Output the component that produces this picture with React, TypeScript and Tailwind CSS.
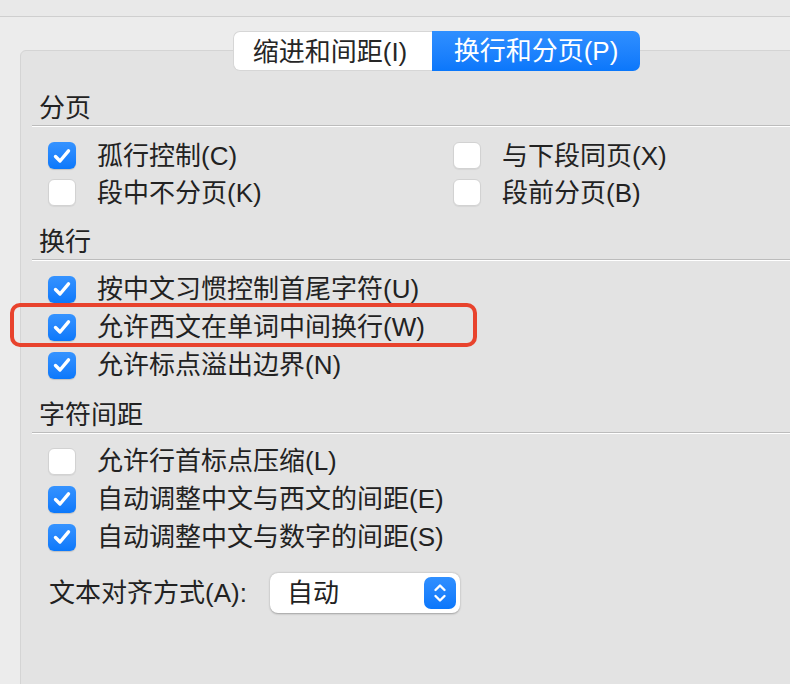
import React from "react";

type Item = { label: string; checked: boolean; highlight?: boolean };

const Check = ({ checked }: { checked: boolean }) =>
  checked ? (
    <div className="flex h-[27px] w-[28px] shrink-0 items-center justify-center rounded-[6px] bg-gradient-to-b from-[#3593ff] to-[#0a78fb] shadow-[0_1px_1px_rgba(0,0,0,0.15)]">
      <svg width="20" height="18" viewBox="0 0 20 18">
        <path
          d="M3.5 9.5 L8 14 L16.5 3.8"
          fill="none"
          stroke="white"
          strokeWidth="3.4"
          strokeLinecap="round"
          strokeLinejoin="round"
        />
      </svg>
    </div>
  ) : (
    <div className="h-[27px] w-[28px] shrink-0 rounded-[6px] border border-[#d2d2d2] bg-white shadow-[0_1px_1px_rgba(0,0,0,0.06)]" />
  );

const Row = ({ item, h = "h-[37px]" }: { item: Item; h?: string }) => (
  <div className={`relative flex items-center gap-[21px] pl-[16px] ${h}`}>
    {item.highlight && (
      <div className="absolute left-[-22px] top-[-5px] h-[44px] w-[467px] rounded-[10px] border-[4px] border-[#e8432d]" />
    )}
    <Check checked={item.checked} />
    <span className="whitespace-nowrap leading-none">{item.label}</span>
  </div>
);

const Heading = ({ text, mt }: { text: string; mt: string }) => (
  <div className={mt}>
    <div className="h-[34px] pl-[7px] leading-[34px]">{text}</div>
    <div className="h-px bg-[#bcbcbc]" />
    <div className="h-px bg-white" />
  </div>
);

const wrapItems: Item[] = [
  { label: "按中文习惯控制首尾字符(U)", checked: true },
  { label: "允许西文在单词中间换行(W)", checked: true, highlight: true },
  { label: "允许标点溢出边界(N)", checked: true },
];

const spacingItems: Item[] = [
  { label: "允许行首标点压缩(L)", checked: false },
  { label: "自动调整中文与西文的间距(E)", checked: true },
  { label: "自动调整中文与数字的间距(S)", checked: true },
];

export default function App() {
  return (
    <div
      className="h-[684px] w-[790px] overflow-hidden bg-[#ececec] text-[26px] text-[#222]"
      style={{ fontFamily: '"Liberation Sans", "Noto Sans CJK SC", sans-serif' }}
    >
      <div className="h-[17px] border-b border-[#cfcfcf] bg-[#e9e9e9]" />

      <div className="relative z-10 mt-[14px] ml-[233px] flex h-[40px] w-[407px] leading-[40px]">
        <div className="w-[199px] rounded-l-[7px] border border-r-0 border-[#d6d6d6] bg-white pr-[6px] text-center text-[#262626]">
          缩进和间距(I)
        </div>
        <div className="w-[208px] rounded-r-[7px] bg-gradient-to-b from-[#2f8fff] to-[#0a77fb] text-center text-white">
          换行和分页(P)
        </div>
      </div>

      <div className="-mt-[21px] ml-[20px] h-[660px] w-[840px] rounded-tl-[6px] border border-[#d4d4d4] bg-[#e3e3e3] pl-[11px] pt-[40px]">
        <Heading text="分页" mt="mt-0" />
        <div className="mt-[10px] grid grid-cols-[405px_1fr]">
          <div>
            <Row item={{ label: "孤行控制(C)", checked: true }} />
            <Row item={{ label: "段中不分页(K)", checked: false }} />
          </div>
          <div>
            <Row item={{ label: "与下段同页(X)", checked: false }} />
            <Row item={{ label: "段前分页(B)", checked: false }} />
          </div>
        </div>

        <Heading text="换行" mt="mt-[14px]" />
        <div className="mt-[9px]">
          {wrapItems.map((it) => (
            <Row key={it.label} item={it} h="h-[38px]" />
          ))}
        </div>

        <Heading text="字符间距" mt="mt-[14px]" />
        <div className="mt-[8px]">
          {spacingItems.map((it) => (
            <Row key={it.label} item={it} h="h-[38px]" />
          ))}
        </div>

        <div className="mt-[17px] flex items-center pl-[17px]">
          <span className="w-[221px] whitespace-nowrap">文本对齐方式(A):</span>
          <div className="flex h-[40px] w-[190px] items-center justify-between rounded-[8px] bg-white pl-[17px] pr-[4px] shadow-[0_0.5px_2px_rgba(0,0,0,0.3)]">
            <span>自动</span>
            <div className="flex h-[32px] w-[32px] items-center justify-center rounded-[7px] bg-gradient-to-b from-[#2f8fff] to-[#0a77fb]">
              <svg width="16" height="24" viewBox="0 0 16 24">
                <path
                  d="M3.5 9 L8 4.5 L12.5 9 M3.5 15 L8 19.5 L12.5 15"
                  fill="none"
                  stroke="white"
                  strokeWidth="2.4"
                  strokeLinecap="round"
                  strokeLinejoin="round"
                />
              </svg>
            </div>
          </div>
        </div>
      </div>
    </div>
  );
}
